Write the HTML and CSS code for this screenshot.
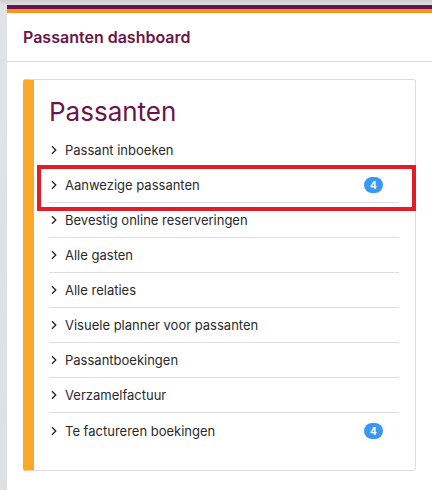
FILE: index.html
```html
<!DOCTYPE html>
<html lang="nl">
<head>
<meta charset="utf-8">
<title>Passanten dashboard</title>
<link rel="stylesheet" href="styles.css">
</head>
<body>
<div class="page">
  <div class="panel">
    <div class="bar-purple"></div>
    <div class="bar-orange"></div>
    <div class="panel-header">Passanten dashboard</div>
    <div class="panel-body">
      <div class="card">
        <h1 class="card-title">Passanten</h1>
        <ul class="menu">
          <li class="row"><span class="chev"><svg width="6" height="10" viewBox="0 0 6 10"><path d="M1 1.2 L4.8 5 L1 8.8" fill="none" stroke="#222" stroke-width="1.3"/></svg></span><span class="label">Passant inboeken</span></li>
          <li class="row highlighted"><span class="chev"><svg width="6" height="10" viewBox="0 0 6 10"><path d="M1 1.2 L4.8 5 L1 8.8" fill="none" stroke="#222" stroke-width="1.3"/></svg></span><span class="label">Aanwezige passanten</span><span class="badge">4</span><span class="marker"></span></li>
          <li class="row"><span class="chev"><svg width="6" height="10" viewBox="0 0 6 10"><path d="M1 1.2 L4.8 5 L1 8.8" fill="none" stroke="#222" stroke-width="1.3"/></svg></span><span class="label">Bevestig online reserveringen</span></li>
          <li class="row"><span class="chev"><svg width="6" height="10" viewBox="0 0 6 10"><path d="M1 1.2 L4.8 5 L1 8.8" fill="none" stroke="#222" stroke-width="1.3"/></svg></span><span class="label">Alle gasten</span></li>
          <li class="row"><span class="chev"><svg width="6" height="10" viewBox="0 0 6 10"><path d="M1 1.2 L4.8 5 L1 8.8" fill="none" stroke="#222" stroke-width="1.3"/></svg></span><span class="label">Alle relaties</span></li>
          <li class="row"><span class="chev"><svg width="6" height="10" viewBox="0 0 6 10"><path d="M1 1.2 L4.8 5 L1 8.8" fill="none" stroke="#222" stroke-width="1.3"/></svg></span><span class="label">Visuele planner voor passanten</span></li>
          <li class="row"><span class="chev"><svg width="6" height="10" viewBox="0 0 6 10"><path d="M1 1.2 L4.8 5 L1 8.8" fill="none" stroke="#222" stroke-width="1.3"/></svg></span><span class="label">Passantboekingen</span></li>
          <li class="row"><span class="chev"><svg width="6" height="10" viewBox="0 0 6 10"><path d="M1 1.2 L4.8 5 L1 8.8" fill="none" stroke="#222" stroke-width="1.3"/></svg></span><span class="label">Verzamelfactuur</span></li>
          <li class="row last"><span class="chev"><svg width="6" height="10" viewBox="0 0 6 10"><path d="M1 1.2 L4.8 5 L1 8.8" fill="none" stroke="#222" stroke-width="1.3"/></svg></span><span class="label">Te factureren boekingen</span><span class="badge">4</span></li>
        </ul>
      </div>
    </div>
  </div>
</div>
</body>
</html>
```

FILE: styles.css
```css
html, body {
  margin: 0;
  padding: 0;
}
body {
  background: linear-gradient(to bottom, #cfcfd1 0, #e2e3e5 6px, #dfe0e2 100%);
  font-family: Inter, "Noto Sans", "Liberation Sans", sans-serif;
  height: 490px;
  overflow: hidden;
}
.page {
  padding: 5px 0 0 7px;
}
.panel {
  background: #fff;
  height: 485px;
}
.bar-purple {
  height: 4px;
  background: #6b1549;
}
.bar-orange {
  height: 4px;
  background: #f8941e;
}
.panel-header {
  height: 49px;
  box-sizing: border-box;
  border-bottom: 1px solid #d9d9d9;
  padding-left: 16px;
  display: flex;
  align-items: center;
  font-size: 16px;
  font-weight: 600;
  color: #6b1549;
  padding-bottom: 1px;
}
.panel-body {
  padding: 17px 16px 0 16px;
}
.card {
  border: 1px solid #dcdcdc;
  border-left: 11px solid #fba82b;
  border-radius: 3px;
  padding: 16px 16px 22px 15px;
  height: 392px;
  box-sizing: border-box;
}
.card-title {
  margin: 0 0 6px 0;
  font-size: 26px;
  line-height: 31px;
  font-weight: 400;
  color: #6b1549;
}
.menu {
  list-style: none;
  margin: 0;
  padding: 0;
}
.row {
  position: relative;
  height: 35px;
  box-sizing: border-box;
  border-bottom: 1px solid #dedede;
  display: flex;
  align-items: center;
  padding: 0 16px 0 2px;
  font-size: 13px;
  color: #2a2a2a;
}
.row.last {
  border-bottom: none;
}
.chev {
  display: flex;
  width: 6px;
  margin-right: 8px;
}
.label {
  flex: 1;
}
.badge {
  min-width: 19px;
  height: 16px;
  border-radius: 8px;
  background: #3a98f5;
  color: #fff;
  font-size: 10px;
  font-weight: 700;
  display: flex;
  align-items: center;
  justify-content: center;
}
.marker {
  position: absolute;
  left: -12px;
  right: -17px;
  top: -3px;
  bottom: -9px;
  border: 4px solid #e31d25;
  pointer-events: none;
}
```
